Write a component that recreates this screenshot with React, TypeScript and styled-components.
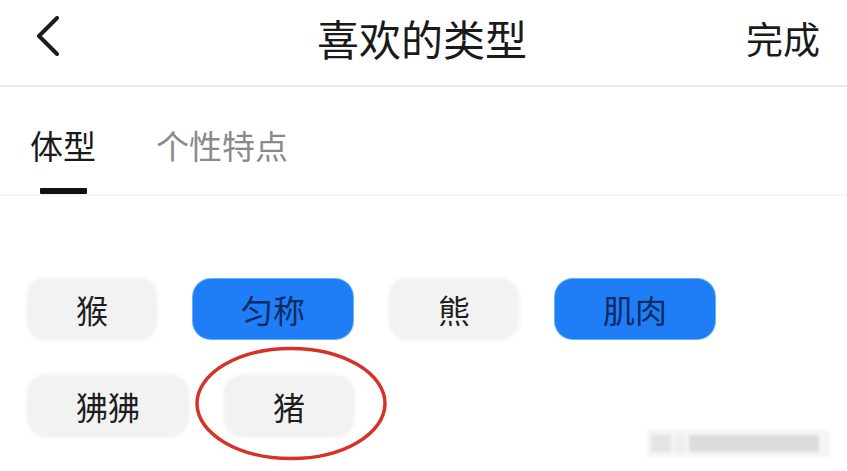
import React, { useState } from 'react';
import styled, { createGlobalStyle } from 'styled-components';

const GlobalStyle = createGlobalStyle`
  body {
    margin: 0;
    background: #ffffff;
    font-family: "Noto Sans CJK SC", "Noto Sans", sans-serif;
  }
`;

const tabs = ['体型', '个性特点'];

const chips = [
  { label: '猴', active: false },
  { label: '匀称', active: true },
  { label: '熊', active: false },
  { label: '肌肉', active: true },
  { label: '狒狒', active: false },
  { label: '猪', active: false, circled: true },
];

export default function App() {
  const [tab, setTab] = useState(0);

  return (
    <>
      <GlobalStyle />
      <Page>
        <Header>
          <BackButton aria-label="back">
            <svg width="26" height="40" viewBox="0 0 26 40" fill="none">
              <path d="M21 2 L3 20 L21 38" stroke="#1c1c1c" strokeWidth="4" strokeLinecap="round" strokeLinejoin="round" />
            </svg>
          </BackButton>
          <Title>喜欢的类型</Title>
          <DoneButton>完成</DoneButton>
        </Header>

        <TabBar>
          {tabs.map((t, i) => (
            <TabItem key={t} onClick={() => setTab(i)}>
              <TabLabel $active={i === tab}>{t}</TabLabel>
              <TabIndicator $active={i === tab} />
            </TabItem>
          ))}
        </TabBar>

        <ChipArea>
          {chips.map((c) => (
            <Chip key={c.label} $active={c.active}>
              {c.label}
              {c.circled && (
                <Circle width="196" height="117" viewBox="0 0 196 117">
                  <ellipse cx="98" cy="58.5" rx="94" ry="55" fill="none" stroke="#d7322a" strokeWidth="3.5" />
                </Circle>
              )}
            </Chip>
          ))}
        </ChipArea>

        <Watermark>
          <Block $w={20} $tone="#e4e4e4" />
          <Block $w={10} $tone="#eeeeee" />
          <Block $w={130} $tone="#dcdcdc" />
        </Watermark>
      </Page>
    </>
  );
}

const Page = styled.div`
  position: relative;
  width: 847px;
  height: 471px;
  overflow: hidden;
  background: #ffffff;
`;

const Header = styled.div`
  display: grid;
  grid-template-columns: 1fr auto 1fr;
  align-items: center;
  height: 85px;
  padding: 0 27px 0 36px;
  border-bottom: 2px solid #e9e9e9;
`;

const BackButton = styled.div`
  display: flex;
  align-items: center;
  justify-self: start;
  margin-top: -14px;
`;

const Title = styled.div`
  font-size: 42px;
  line-height: 52px;
  color: #1a1a1a;
  margin: -10px 0 0 -12px;
`;

const DoneButton = styled.div`
  justify-self: end;
  font-size: 37px;
  line-height: 48px;
  color: #1a1a1a;
  margin-top: -10px;
`;

const TabBar = styled.div`
  display: flex;
  gap: 60px;
  padding: 34px 0 0 30px;
  border-bottom: 2px solid #f4f4f4;
`;

const TabItem = styled.div`
  display: flex;
  flex-direction: column;
  align-items: center;
  cursor: pointer;
`;

const TabLabel = styled.div<{ $active: boolean }>`
  font-size: 33px;
  line-height: 48px;
  color: ${(p) => (p.$active ? '#1a1a1a' : '#8a8a8a')};
`;

const TabIndicator = styled.div<{ $active: boolean }>`
  width: 47px;
  height: 6px;
  margin-top: 19px;
  border-radius: 1px;
  background: ${(p) => (p.$active ? '#111111' : 'transparent')};
`;

const ChipArea = styled.div`
  display: flex;
  flex-wrap: wrap;
  column-gap: 37px;
  row-gap: 37px;
  width: 740px;
  padding: 83px 0 0 28px;
`;

const Chip = styled.div<{ $active: boolean }>`
  position: relative;
  display: flex;
  align-items: center;
  justify-content: center;
  height: 60px;
  padding: 0 48px;
  border-radius: 18px;
  font-size: 32px;
  color: ${(p) => (p.$active ? '#0c2a63' : '#1e1e1e')};
  background: ${(p) => (p.$active ? '#1f7ef6' : '#f2f2f2')};
  box-shadow: ${(p) => (p.$active ? '0 0 0 1px #5fb0ff' : '0 0 4px 2px #f4f4f4')};
`;

const Circle = styled.svg`
  position: absolute;
  left: -32px;
  top: -31px;
  pointer-events: none;
`;

const Watermark = styled.div`
  position: absolute;
  right: 17px;
  bottom: 14px;
  display: flex;
  gap: 4px;
  width: 175px;
  height: 27px;
  padding: 0 4px;
  background: #f5f5f5;
  filter: blur(1.5px);
`;

const Block = styled.div<{ $w: number; $tone: string }>`
  width: ${(p) => p.$w}px;
  margin: 5px 0;
  background: ${(p) => p.$tone};
`;
